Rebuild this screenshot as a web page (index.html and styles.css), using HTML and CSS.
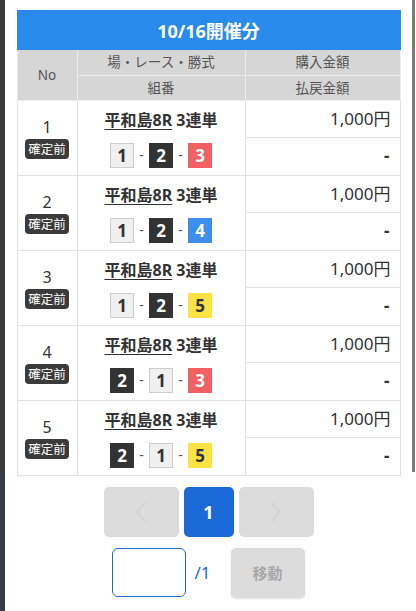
FILE: index.html
```html
<!DOCTYPE html>
<html lang="ja">
<head>
<meta charset="utf-8">
<link rel="stylesheet" href="styles.css">
</head>
<body>
<div class="shell">
  <div class="edge-left"><div class="edge-top"></div><div class="edge-bottom"></div></div>
  <main class="main">
    <div class="title">10/16開催分</div>
    <table class="bets">
      <thead>
        <tr>
          <th class="c-no" rowspan="2">No</th>
          <th class="c-race">場・レース・勝式</th>
          <th class="c-amt">購入金額</th>
        </tr>
        <tr>
          <th>組番</th>
          <th>払戻金額</th>
        </tr>
      </thead>
      <tbody>
        <tr>
          <td class="no" rowspan="2"><div class="no-in"><span class="num">1</span><span class="badge">確定前</span></div></td>
          <td class="race"><span class="place">平和島8R</span> 3連単</td>
          <td class="amt">1,000円</td>
        </tr>
        <tr>
          <td class="combo"><span class="bx b1">1</span><span class="dash">-</span><span class="bx b2">2</span><span class="dash">-</span><span class="bx b3">3</span></td>
          <td class="pay">-</td>
        </tr>
        <tr>
          <td class="no" rowspan="2"><div class="no-in"><span class="num">2</span><span class="badge">確定前</span></div></td>
          <td class="race"><span class="place">平和島8R</span> 3連単</td>
          <td class="amt">1,000円</td>
        </tr>
        <tr>
          <td class="combo"><span class="bx b1">1</span><span class="dash">-</span><span class="bx b2">2</span><span class="dash">-</span><span class="bx b4">4</span></td>
          <td class="pay">-</td>
        </tr>
        <tr>
          <td class="no" rowspan="2"><div class="no-in"><span class="num">3</span><span class="badge">確定前</span></div></td>
          <td class="race"><span class="place">平和島8R</span> 3連単</td>
          <td class="amt">1,000円</td>
        </tr>
        <tr>
          <td class="combo"><span class="bx b1">1</span><span class="dash">-</span><span class="bx b2">2</span><span class="dash">-</span><span class="bx b5">5</span></td>
          <td class="pay">-</td>
        </tr>
        <tr>
          <td class="no" rowspan="2"><div class="no-in"><span class="num">4</span><span class="badge">確定前</span></div></td>
          <td class="race"><span class="place">平和島8R</span> 3連単</td>
          <td class="amt">1,000円</td>
        </tr>
        <tr>
          <td class="combo"><span class="bx b2">2</span><span class="dash">-</span><span class="bx b1">1</span><span class="dash">-</span><span class="bx b3">3</span></td>
          <td class="pay">-</td>
        </tr>
        <tr>
          <td class="no" rowspan="2"><div class="no-in"><span class="num">5</span><span class="badge">確定前</span></div></td>
          <td class="race"><span class="place">平和島8R</span> 3連単</td>
          <td class="amt">1,000円</td>
        </tr>
        <tr>
          <td class="combo"><span class="bx b2">2</span><span class="dash">-</span><span class="bx b1">1</span><span class="dash">-</span><span class="bx b5">5</span></td>
          <td class="pay">-</td>
        </tr>
      </tbody>
    </table>
    <div class="pager">
      <button class="pg side" type="button"><svg width="14" height="22" viewBox="0 0 14 22"><path d="M11 2 L3 11 L11 20" fill="none" stroke="#cfcfcf" stroke-width="1.3"/></svg></button>
      <button class="pg cur" type="button">1</button>
      <button class="pg side" type="button"><svg width="14" height="22" viewBox="0 0 14 22"><path d="M3 2 L11 11 L3 20" fill="none" stroke="#cfcfcf" stroke-width="1.3"/></svg></button>
    </div>
    <div class="jump">
      <input class="jump-in" type="text">
      <span class="total">/1</span>
      <button class="go" type="button">移動</button>
    </div>
  </main>
  <div class="edge-right"><div class="edge-rtop"></div></div>
</div>
</body>
</html>
```

FILE: styles.css
```css
html, body {
  margin: 0;
  padding: 0;
  background: #fff;
}
body {
  font-family: "Noto Sans", "Noto Sans CJK JP", sans-serif;
  color: #333;
}
.shell {
  display: flex;
  width: 416px;
  height: 611px;
  overflow: hidden;
}
.edge-left {
  width: 5px;
  flex-shrink: 0;
  display: flex;
  flex-direction: column;
}
.edge-top {
  height: 472px;
  flex-shrink: 0;
  background: #3a3a3a;
}
.edge-bottom {
  flex: 1;
  background: #343a46;
}
.edge-right {
  width: 4px;
  flex-shrink: 0;
  display: flex;
  flex-direction: column;
}
.edge-rtop {
  width: 3px;
  height: 472px;
  flex-shrink: 0;
  background: #7c7c7c;
}
.main {
  width: 407px;
  flex-shrink: 0;
  display: flex;
  flex-direction: column;
  align-items: center;
  padding-top: 10px;
}
.main > * {
  flex-shrink: 0;
}
.title {
  width: 384px;
  height: 40px;
  background: #288aea;
  color: #fff;
  font-weight: 700;
  font-size: 18px;
  display: flex;
  align-items: center;
  justify-content: center;
}
.bets {
  width: 384px;
  border-collapse: collapse;
  table-layout: fixed;
}
.bets th {
  background: #d6d6d6;
  color: #555;
  font-weight: 400;
  font-size: 13.5px;
  height: 25px;
  padding: 0;
  border: 1px solid #ececec;
  line-height: 20px;
  box-sizing: border-box;
}
.bets thead tr:first-child th {
  border-top: none;
}
.c-no { width: 60px; }
.c-race { width: 168px; }
.bets td {
  border: 1px solid #e2e2e2;
  padding: 0;
  line-height: 20px;
  box-sizing: border-box;
}
.no {
  text-align: center;
  vertical-align: middle;
}
.no-in {
  display: flex;
  flex-direction: column;
  align-items: center;
  gap: 3px;
  padding-top: 1px;
}
.num {
  font-size: 16px;
  line-height: 18px;
  color: #333;
}
.badge {
  background: #3b3b3b;
  color: #fff;
  font-family: "Noto Sans CJK JP", sans-serif;
  font-size: 12.5px;
  line-height: 20px;
  height: 20px;
  padding: 0 3px;
  border-radius: 4px;
}
.race {
  height: 37px;
  text-align: center;
  font-size: 16px;
  font-weight: 700;
  color: #333;
  border-bottom: none !important;
  vertical-align: middle;
  padding-top: 3px !important;
}
.place {
  text-decoration: underline;
  text-underline-offset: 3px;
  text-decoration-thickness: 1px;
}
.combo {
  height: 38px;
  border-top: none !important;
  text-align: center;
  vertical-align: middle;
  padding-bottom: 1px !important;
}
.bx {
  display: inline-block;
  width: 24px;
  height: 25px;
  line-height: 25px;
  text-align: center;
  font-size: 17px;
  font-weight: 700;
  vertical-align: middle;
  box-sizing: border-box;
}
.b1 { background: #f0f0f0; border: 1px solid #cdcdcd; color: #333; line-height: 23px; }
.b2 { background: #333; color: #fff; }
.b3 { background: #f16163; color: #fff; }
.b4 { background: #3e8ef0; color: #fff; }
.b5 { background: #fde243; color: #333; }
.dash {
  display: inline-block;
  width: 15px;
  text-align: center;
  font-size: 14px;
  color: #555;
  vertical-align: middle;
}
.amt {
  height: 37px;
  text-align: right;
  padding-right: 9px !important;
  font-size: 17px;
  color: #333;
}
.pay {
  height: 38px;
  text-align: right;
  padding-right: 10px !important;
  font-size: 17px;
  font-weight: 700;
  color: #333;
}
.pager {
  display: flex;
  gap: 5px;
  margin-top: 11px;
}
.pg {
  height: 50px;
  border: none;
  border-radius: 5px;
  padding: 0;
  display: flex;
  align-items: center;
  justify-content: center;
  font-family: inherit;
}
.side {
  width: 75px;
  background: #dcdcdc;
}
.cur {
  width: 50px;
  background: #1c69d9;
  color: #fff;
  font-size: 18px;
  font-weight: 700;
}
.jump {
  display: flex;
  align-items: center;
  margin-top: 11px;
}
.jump-in {
  width: 74px;
  height: 49px;
  box-sizing: border-box;
  border: 1px solid #1c69d9;
  border-radius: 6px;
  margin: 0;
  padding: 0;
  outline: none;
}
.total {
  color: #1c69d9;
  font-size: 17px;
  margin: 0 20px 0 8px;
}
.go {
  width: 74px;
  height: 50px;
  border: none;
  border-radius: 5px;
  background: #dcdcdc;
  color: #a8a8a8;
  font-family: "Noto Sans CJK JP", sans-serif;
  font-size: 15px;
  font-weight: 700;
  box-shadow: 0 1px 2px rgba(0,0,0,0.12);
}
```
